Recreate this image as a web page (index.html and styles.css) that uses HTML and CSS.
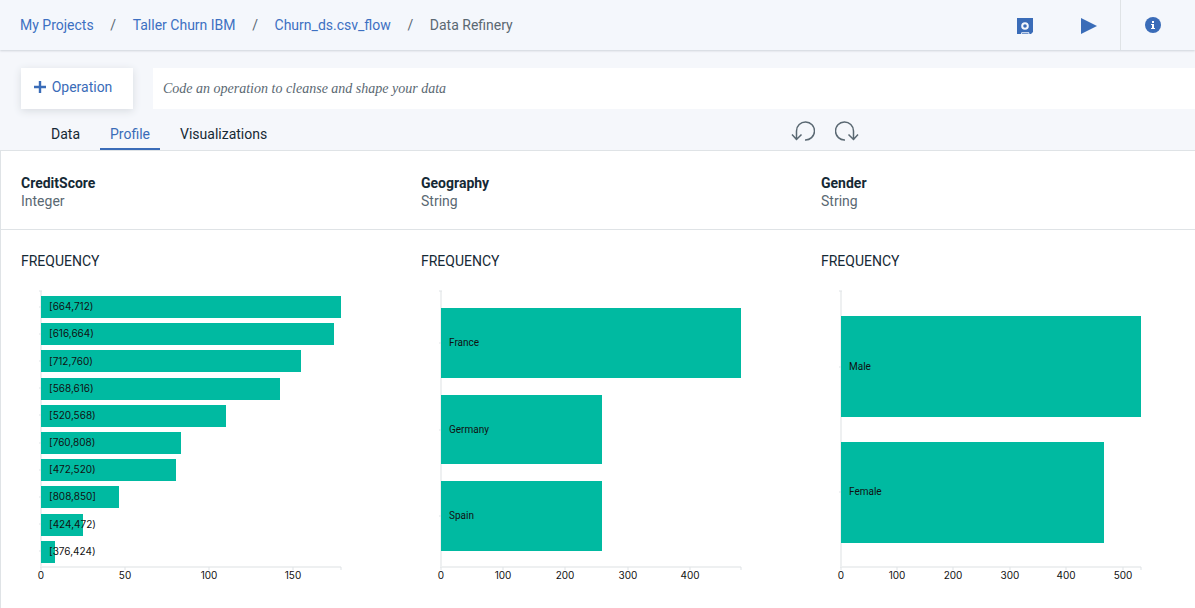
FILE: index.html
```html
<!DOCTYPE html>
<html lang="en">
<head>
<meta charset="utf-8">
<title>Data Refinery</title>
<link rel="stylesheet" href="styles.css">
</head>
<body>
<header class="header">
  <nav class="crumbs" aria-label="Breadcrumb">
    <a href="#">My Projects</a><span class="sep">/</span>
    <a href="#">Taller Churn IBM</a><span class="sep">/</span>
    <a href="#">Churn_ds.csv_flow</a><span class="sep">/</span>
    <span class="current">Data Refinery</span>
  </nav>
  <div class="actions">
    <button class="icon-button" aria-label="Save"><svg width="16" height="16" viewBox="0 0 16 16"><path fill="#3a6cb8" fill-rule="evenodd" d="M0 0h16v14l-2 2h-1.500l-.500-1.800H4.500L4 16H0zM8 4.200a3.800 3.800 0 1 0 0 7.600a3.800 3.800 0 1 0 0-7.600zM8 6.200a1.800 1.800 0 1 1 0 3.600a1.800 1.800 0 1 1 0-3.600z"/><path fill="#3a6cb8" d="M5 15.300h6.500v.700H5z"/></svg></button>
    <button class="icon-button" aria-label="Run"><svg width="16" height="16" viewBox="0 0 16 16"><path fill="#3a6cb8" d="M0 0l16 8l-16 8z"/></svg></button>
    <button class="icon-button info" aria-label="Information"><svg width="16" height="16" viewBox="0 0 16 16"><circle cx="8" cy="8" r="8" fill="#3a6cb8"/><path fill="#fff" d="M7 4h2v2H7zM6 7h3v4h1v1H6v-1h1V8H6z"/></svg></button>
  </div>
</header>
<section class="toolbar">
  <div class="command-row">
    <button class="operation"><svg width="12" height="12" viewBox="0 0 12 12"><path d="M6 0v12M0 6h12" stroke="#3a6cb8" stroke-width="2.400"/></svg>Operation</button>
    <input class="command" type="text" aria-label="Operation code" placeholder="Code an operation to cleanse and shape your data">
  </div>
  <div class="tab-row">
    <nav class="tabs">
      <button class="tab">Data</button>
      <button class="tab selected">Profile</button>
      <button class="tab">Visualizations</button>
    </nav>
    <div class="history">
      <button class="icon-button" aria-label="Undo"><svg width="24" height="22" viewBox="0 0 24 22"><path class="stroke" d="M14 20a9 9 0 1 0-8.500-9v9M1 14.500l4.500 5l5-5"/></svg></button>
      <button class="icon-button" aria-label="Redo"><svg width="24" height="22" viewBox="0 0 24 22"><path class="stroke" d="M10 20a9 9 0 1 1 8.500-9v9M23 14.500l-4.500 5l-5-5"/></svg></button>
    </div>
  </div>
</section>
<main class="profile">
  <div class="columns heads">
    <div><h2>CreditScore</h2><p>Integer</p></div>
    <div><h2>Geography</h2><p>String</p></div>
    <div><h2>Gender</h2><p>String</p></div>
  </div>
  <div class="columns charts">
    <section>
      <h3>FREQUENCY</h3>
      <svg class="chart" width="340" height="300" viewBox="0 0 340 300">
        <path class="axis" d="M20 8V285M20 284H320"/>
        <path class="tick" d="M18 8h3M18 24h2M18 51h2M18 78h2M18 105h2M18 132h2M18 160h2M18 187h2M18 214h2M18 241h2M18 268h2M20 284v3M104 284v3M188 284v3M272 284v3M320 284v3"/>
        <g class="bars"><rect x="20" y="13" width="300" height="22"/><rect x="20" y="40" width="293" height="22"/><rect x="20" y="67" width="260" height="22"/><rect x="20" y="95" width="239" height="22"/><rect x="20" y="122" width="185" height="22"/><rect x="20" y="149" width="140" height="22"/><rect x="20" y="176" width="135" height="22"/><rect x="20" y="203" width="78" height="22"/><rect x="20" y="231" width="42" height="22"/><rect x="20" y="258" width="14" height="22"/></g>
        <g class="numeric"><text x="28" y="27">[664,712)</text><text x="28" y="54">[616,664)</text><text x="28" y="82">[712,760)</text><text x="28" y="109">[568,616)</text><text x="28" y="136">[520,568)</text><text x="28" y="163">[760,808)</text><text x="28" y="190">[472,520)</text><text x="28" y="217">[808,850]</text><text x="28" y="245">[424,472)</text><text x="28" y="272">[376,424)</text></g>
        <g class="numeric scale"><text x="20" y="296">0</text><text x="104" y="296">50</text><text x="188" y="296">100</text><text x="272" y="296">150</text></g>
      </svg>
    </section>
    <section>
      <h3>FREQUENCY</h3>
      <svg class="chart" width="340" height="300" viewBox="0 0 340 300">
        <path class="axis" d="M20 8V285M20 284H320"/>
        <path class="tick" d="M18 8h3M18 60h2M18 147h2M18 233h2M20 284v3M82 284v3M144 284v3M207 284v3M269 284v3M320 284v3"/>
        <g class="bars"><rect x="20" y="25" width="300" height="70"/><rect x="20" y="112" width="161" height="69"/><rect x="20" y="198" width="161" height="70"/></g>
        <text x="28" y="63">France</text><text x="28" y="150">Germany</text><text x="28" y="236">Spain</text>
        <g class="numeric scale"><text x="20" y="296">0</text><text x="82" y="296">100</text><text x="144" y="296">200</text><text x="207" y="296">300</text><text x="269" y="296">400</text></g>
      </svg>
    </section>
    <section>
      <h3>FREQUENCY</h3>
      <svg class="chart" width="340" height="300" viewBox="0 0 340 300">
        <path class="axis" d="M20 8V285M20 284H320"/>
        <path class="tick" d="M18 8h3M18 84h2M18 209h2M20 284v3M76 284v3M132 284v3M189 284v3M245 284v3M302 284v3M320 284v3"/>
        <g class="bars"><rect x="20" y="33" width="300" height="101"/><rect x="20" y="159" width="263" height="101"/></g>
        <text x="28" y="87">Male</text><text x="28" y="212">Female</text>
        <g class="numeric scale"><text x="20" y="296">0</text><text x="76" y="296">100</text><text x="132" y="296">200</text><text x="189" y="296">300</text><text x="245" y="296">400</text><text x="302" y="296">500</text></g>
      </svg>
    </section>
  </div>
</main>
</body>
</html>
```
FILE: styles.css
```css
* { box-sizing: border-box; }
body {
  margin: 0;
  min-height: 100vh;
  display: flex;
  flex-direction: column;
  overflow: hidden;
  background: #f5f7fb;
  color: #152935;
  font: 14px/18px Roboto, "Noto Sans", sans-serif;
}
button { border: 0; padding: 0; background: none; font: inherit; color: inherit; cursor: pointer; }
h2, h3, p { margin: 0; font-size: 14px; }
svg { display: block; }

.header {
  z-index: 1;
  display: flex;
  justify-content: space-between;
  height: 50px;
  padding-left: 20px;
  background: #f4f7fc;
  box-shadow: 0 1px 2px 0 #cfd4da;
}
.crumbs { display: flex; align-items: center; color: #5a6872; white-space: nowrap; }
.crumbs a { color: #3d70c2; text-decoration: none; }
.sep { width: 39px; text-align: center; }
.actions { display: flex; align-items: center; }
.actions .icon-button { width: 64px; height: 50px; display: flex; align-items: center; justify-content: center; padding: 2px 0 0 2px; }
.actions .info { width: 75px; padding: 0 10px 0 0; border-left: 1px solid #dfe3e6; }

.toolbar { padding-top: 18px; }
.command-row { display: flex; gap: 20px; padding-left: 21px; }
.operation {
  display: flex;
  align-items: center;
  justify-content: center;
  gap: 6px;
  width: 112px;
  height: 41px;
  padding: 0 8px 3px 0;
  background: #fff;
  color: #3a6cb8;
  box-shadow: 0 2px 8px #d8dce1;
}
.command {
  flex: 1;
  min-width: 0;
  height: 41px;
  padding: 0 10px;
  border: 0;
  background: #fff;
  font: italic 14px "Liberation Serif", serif;
}
.command::placeholder { color: #5a6872; opacity: 1; }
.tab-row { display: flex; justify-content: space-between; height: 41px; padding-left: 41px; }
.tabs { display: flex; gap: 10px; align-items: flex-end; }
.tab { height: 32px; padding: 2px 10px 0; border-bottom: 2px solid transparent; }
.tab.selected { color: #3a6cb8; border-color: #3a6cb8; }
.history { display: flex; gap: 20px; align-items: center; padding: 2px 336px 0 0; }
.stroke { fill: none; stroke: #5a6872; stroke-width: 1.500; }

.profile { flex: 1; border: solid #dfe3e6; border-width: 1px 0 0 1px; background: #fff; }
.columns { display: grid; grid-template-columns: repeat(3, 400px); padding-left: 20px; }
.heads { padding-top: 23px; height: 79px; border-bottom: 1px solid #dfe3e6; }
.heads p { color: #5a6872; }
.charts { padding-top: 22px; }
.charts h3 { font-weight: 400; margin-bottom: 13px; }
.chart { font-size: 10px; }
.chart text { fill: #111; }
.numeric { font-family: Inter, sans-serif; }
.axis { fill: none; stroke: #eef0f1; stroke-width: 2; }
.tick { fill: none; stroke: #dfe3e6; }
.bars { fill: #00baa1; }
.scale { text-anchor: middle; }
```
